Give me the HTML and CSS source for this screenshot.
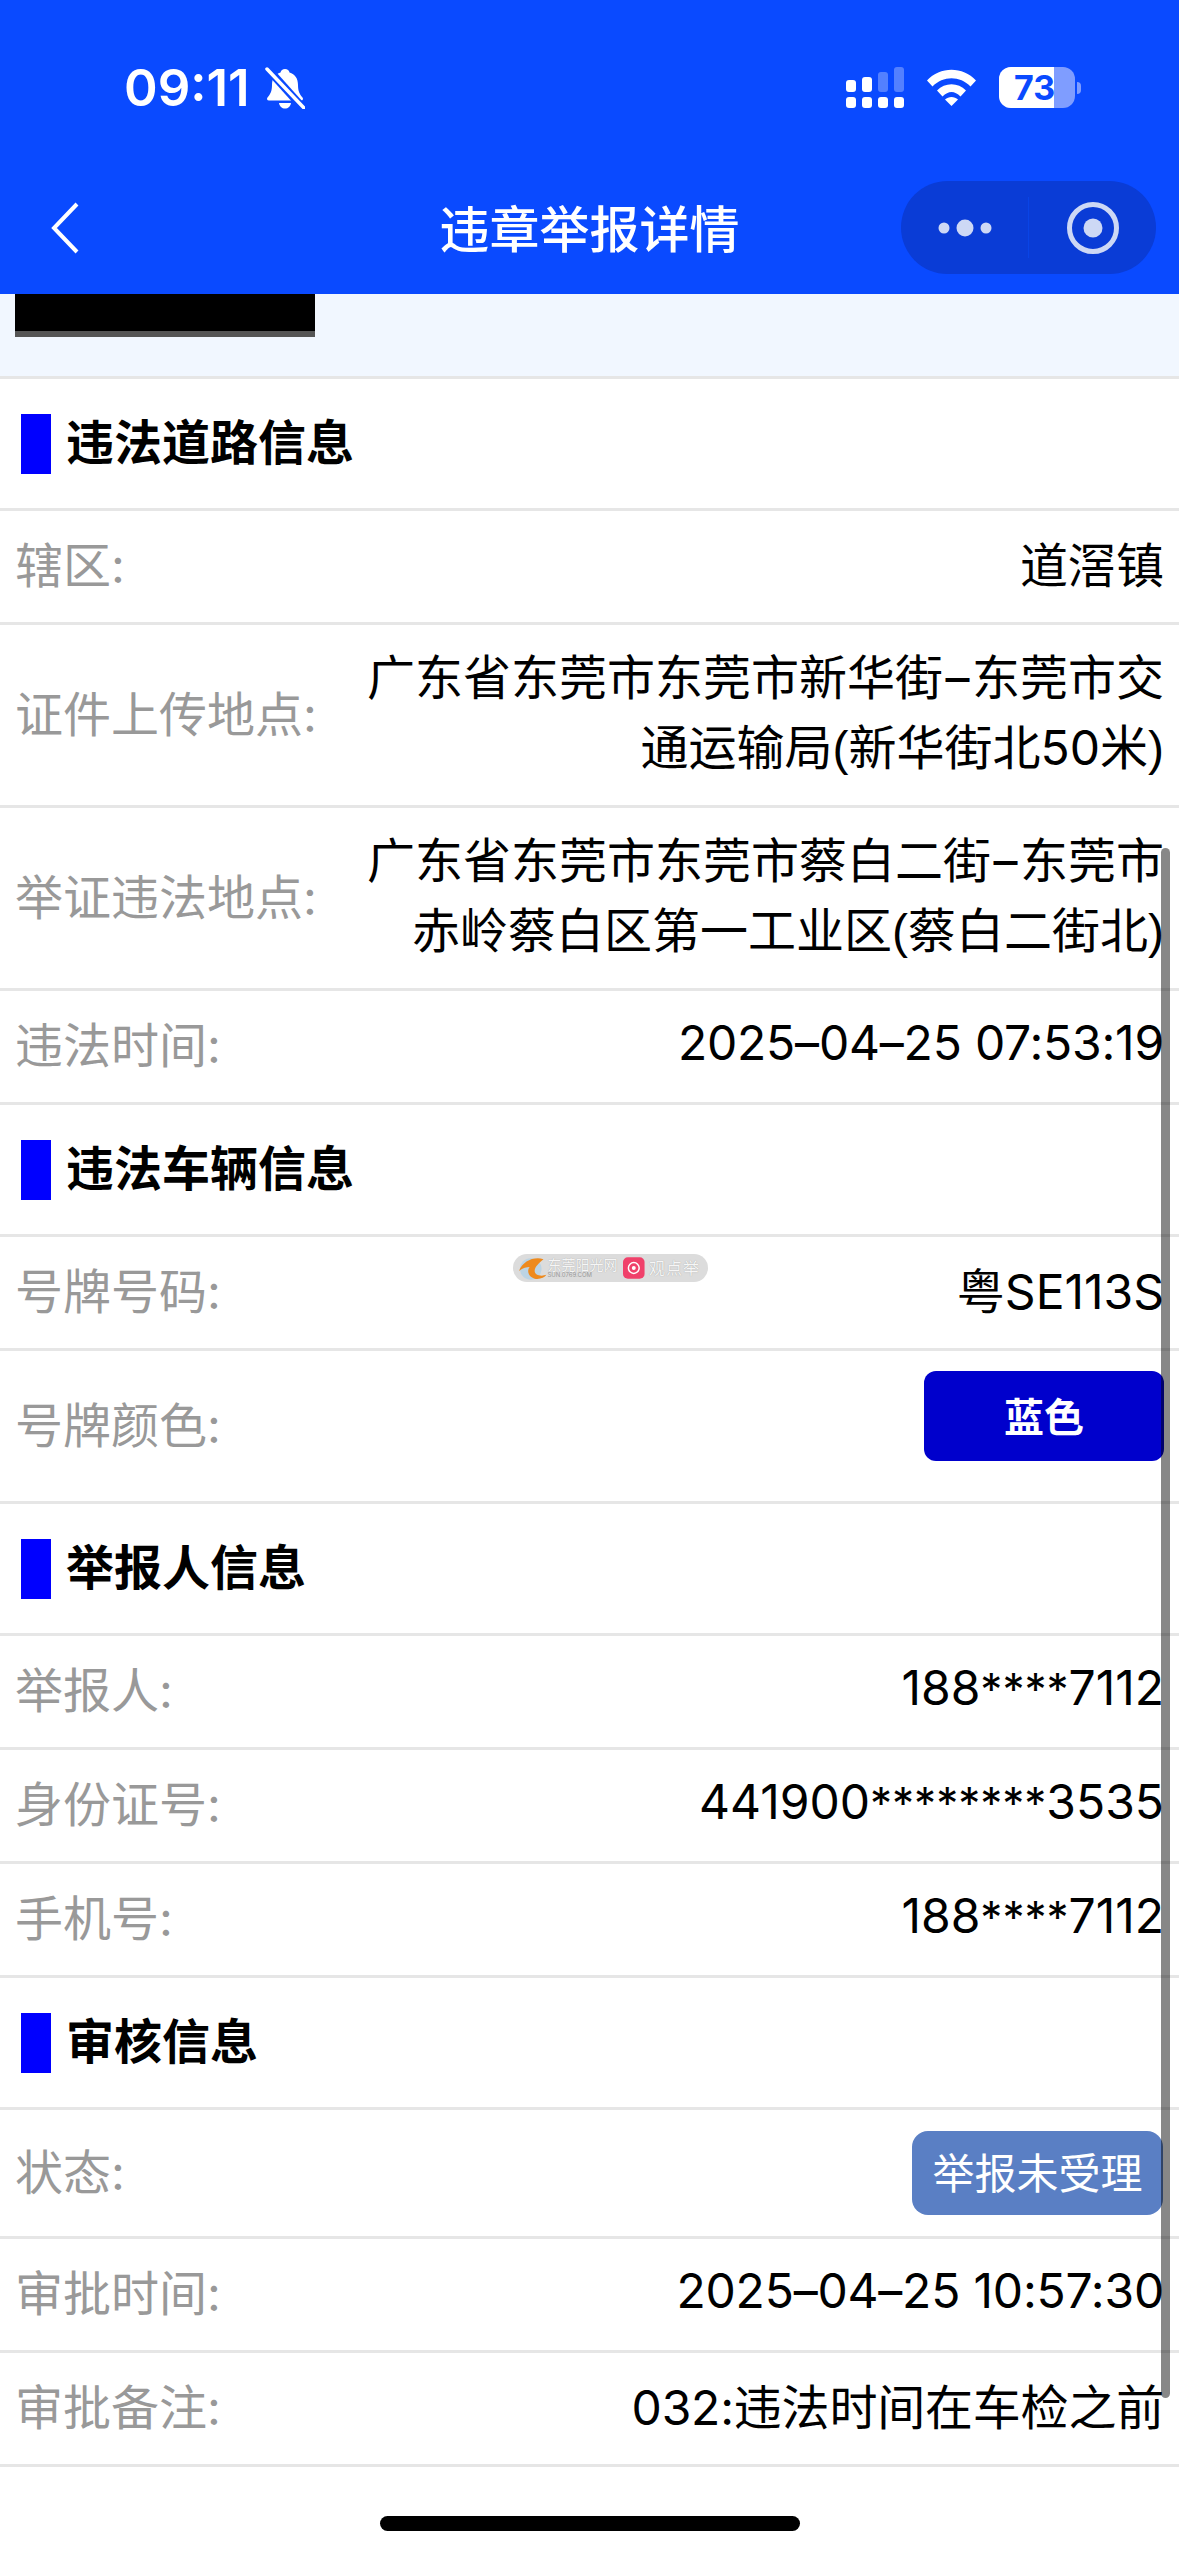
FILE: index.html
```html
<!DOCTYPE html>
<html>
<head>
<meta charset="utf-8">
<meta name="viewport" content="width=device-width, initial-scale=1.0">
<title>违章举报详情</title>
<link rel="stylesheet" href="styles.css">
</head>
<body>
<div class="page">
<div class="header">
  <div class="status">
    <div class="status-left">
      <span class="time">09:11</span>
      <svg class="bell" viewBox="0 0 40 42" width="40" height="42">
        <path d="M20 2c2.500 0 4 1.500 4.500 3.500C30 7 33 11.500 33 18c0 6 1.500 9 4.500 12.500 1 1.500.5 3-1.500 3H4c-2 0-2.500-1.500-1.500-3C5.500 27 7 24 7 18 7 11.500 10 7 15.500 5.500 16 3.500 17.500 2 20 2z" fill="#fff"/>
        <path d="M14 36h12c-.5 3.500-3 5.500-6 5.500s-5.500-2-6-5.500z" fill="#fff"/>
        <path d="M3 2l35 39" stroke="#0a4aff" stroke-width="8"/>
        <path d="M2 2l37 39" stroke="#fff" stroke-width="3.500" stroke-linecap="round"/>
      </svg>
    </div>
    <div class="status-right">
      <svg viewBox="0 0 58 41" width="58" height="41">
        <g fill="#fff">
          <rect x="0" y="13" width="10" height="12" rx="3"/>
          <rect x="16" y="10" width="10" height="15" rx="3"/>
          <rect x="0" y="30" width="10" height="11" rx="3"/>
          <rect x="16" y="30" width="10" height="11" rx="3"/>
          <rect x="32" y="30" width="10" height="11" rx="3"/>
          <rect x="48" y="30" width="10" height="11" rx="3"/>
        </g>
        <g fill="#fff" fill-opacity=".3">
          <rect x="32" y="5" width="10" height="20" rx="3"/>
          <rect x="48" y="0" width="10" height="25" rx="3"/>
        </g>
      </svg>
      <svg viewBox="0 0 49 37" width="49" height="37">
        <path d="M0 11.500C13-3 36-3 49 11.500l-5.500 6C33 6.500 16 6.500 5.500 17.500z" fill="#fff"/>
        <path d="M10 21.500C18 13 31 13 39 21.500l-5.500 6C27.500 21.500 21.500 21.500 15.500 27.500z" fill="#fff"/>
        <path d="M18 30.500c3.500-3.500 9.500-3.500 13 0l-6.500 6.500z" fill="#fff"/>
      </svg>
      <div class="battery">
        <div class="battery-body">
          <div class="battery-fill"></div>
          <span class="battery-num">73</span>
        </div>
        <div class="battery-tip"></div>
      </div>
    </div>
  </div>
  <div class="nav">
    <div class="nav-back">
      <svg viewBox="0 0 30 52" width="30" height="52">
        <path d="M27 2L4 26l23 24" fill="none" stroke="#fff" stroke-width="4"/>
      </svg>
    </div>
    <div class="nav-title">违章举报详情</div>
    <div class="nav-right">
      <div class="capsule">
        <div class="capsule-part">
          <svg viewBox="0 0 54 20" width="54" height="20">
            <circle cx="6" cy="10" r="5.500" fill="#cdd8f5"/>
            <circle cx="27" cy="10" r="8.500" fill="#cdd8f5"/>
            <circle cx="48" cy="10" r="5.500" fill="#cdd8f5"/>
          </svg>
        </div>
        <div class="capsule-line"></div>
        <div class="capsule-part">
          <svg viewBox="0 0 54 54" width="54" height="54">
            <circle cx="27" cy="27" r="23.500" fill="none" stroke="#cdd8f5" stroke-width="5"/>
            <circle cx="27" cy="27" r="9.500" fill="#cdd8f5"/>
          </svg>
        </div>
      </div>
    </div>
  </div>
</div>

<div class="band">
  <div class="redact"></div>
</div>

<div class="section-title"><span class="bar"></span><span class="title-text">违法道路信息</span></div>
<div class="row"><span class="label">辖区:</span><span class="value">道滘镇</span></div>
<div class="row row-tall"><span class="label">证件上传地点:</span>
  <div class="value value-wrap">
    <div>广东省东莞市东莞市新华街<span class="dash">–</span>东莞市交</div>
    <div>通运输局<span class="paren">(</span>新华街北50米<span class="paren">)</span></div>
  </div>
</div>
<div class="row row-tall"><span class="label">举证违法地点:</span>
  <div class="value value-wrap">
    <div>广东省东莞市东莞市蔡白二街<span class="dash">–</span>东莞市</div>
    <div>赤岭蔡白区第一工业区<span class="paren">(</span>蔡白二街北<span class="paren">)</span></div>
  </div>
</div>
<div class="row"><span class="label">违法时间:</span><span class="value value-num">2025–04–25 07:53:19</span></div>

<div class="section-title"><span class="bar"></span><span class="title-text">违法车辆信息</span></div>
<div class="row"><span class="label">号牌号码:</span><span class="value">粤SE113S</span></div>
<div class="row row-plate"><span class="label">号牌颜色:</span><span class="plate">蓝色</span></div>

<div class="section-title"><span class="bar"></span><span class="title-text">举报人信息</span></div>
<div class="row"><span class="label">举报人:</span><span class="value">188<span class="mask">****</span>7112</span></div>
<div class="row"><span class="label">身份证号:</span><span class="value">441900<span class="mask">********</span>3535</span></div>
<div class="row"><span class="label">手机号:</span><span class="value">188<span class="mask">****</span>7112</span></div>

<div class="section-title"><span class="bar"></span><span class="title-text">审核信息</span></div>
<div class="row row-status"><span class="label">状态:</span><span class="badge">举报未受理</span></div>
<div class="row"><span class="label">审批时间:</span><span class="value value-num">2025–04–25 10:57:30</span></div>
<div class="row"><span class="label">审批备注:</span><span class="value value-num">032:违法时间在车检之前</span></div>

<div class="home"><div class="home-bar"></div></div>

<div class="watermark">
  <svg viewBox="0 0 30 24" width="30" height="24">
    <circle cx="13" cy="13" r="11" fill="#bcd4e4"/>
    <path d="M26 3C16 0 5 5 1 15c4-3 8-4 11-4-3 3-2 10 5 12 5 1 10-1 12-4-6 2-12 0-12-4 0-4 4-8 9-12z" fill="#ee8a1d"/>
  </svg>
  <span class="wm-text"><span class="wm-name">东莞阳光网</span><span class="wm-sub">SUN.0769.COM</span></span>
  <svg class="wm-logo" viewBox="0 0 22 22" width="22" height="22">
    <rect width="22" height="22" rx="5" fill="#f0406a"/>
    <circle cx="11" cy="11" r="5.500" fill="none" stroke="#fff" stroke-width="1.500"/>
    <circle cx="11" cy="11" r="2" fill="#fff"/>
  </svg>
  <span class="wm-text"><span class="wm-name wm-name-short">观点举</span></span>
</div>
<div class="scrollbar"></div>
</div>
</body>
</html>
```

FILE: styles.css
```css
* { box-sizing: border-box; }
body {
  margin: 0;
  background: #fff;
  font-family: Inter, "Noto Sans CJK SC", sans-serif;
  color: #000;
}
.page {
  position: relative;
  height: 2556px;
  overflow: hidden;
}

/* top bar */
.header {
  height: 294px;
  background: #0a4aff;
  color: #fff;
}
.status {
  height: 175px;
  padding: 0 98px 0 124px;
  display: flex;
  align-items: center;
  justify-content: space-between;
}
.status-left {
  display: flex;
  align-items: center;
  gap: 15px;
}
.time {
  font-size: 51px;
  font-weight: 600;
  line-height: 1;
}
.status-right {
  display: flex;
  align-items: center;
  gap: 23px;
}
.battery {
  display: flex;
  align-items: center;
  gap: 2px;
}
.battery-body {
  position: relative;
  width: 76px;
  height: 41px;
  border-radius: 12px;
  background: #7f9dff;
  overflow: hidden;
}
.battery-fill {
  width: 55px;
  height: 100%;
  background: #fff;
}
.battery-num {
  position: absolute;
  top: 0;
  left: 15px;
  font-size: 34px;
  font-weight: 700;
  line-height: 41px;
  color: #0a4aff;
}
.battery-tip {
  width: 4px;
  height: 12px;
  border-radius: 0 4px 4px 0;
  background: #7f9dff;
}
.nav {
  height: 105px;
  display: grid;
  grid-template-columns: 1fr auto 1fr;
  align-items: center;
}
.nav-back {
  padding-left: 50px;
  display: flex;
}
.nav-title {
  font-size: 50px;
  font-weight: 500;
  padding-bottom: 3px;
}
.nav-right {
  display: flex;
  justify-content: flex-end;
  padding-right: 23px;
}
.capsule {
  width: 255px;
  height: 93px;
  border-radius: 47px;
  background: #0a3cd6;
  display: flex;
  align-items: center;
}
.capsule-part {
  flex: 1;
  display: flex;
  justify-content: center;
}
.capsule-line {
  width: 1px;
  height: 61px;
  background: #0a44e6;
}

.band {
  height: 82px;
  background: #f1f7ff;
}
.redact {
  width: 300px;
  height: 43px;
  margin-left: 15px;
  background: #000;
  border-bottom: 6px solid #555;
}

/* sections */
.section-title {
  height: 132px;
  border-top: 3px solid #e6e6e6;
  padding-left: 21px;
  display: flex;
  align-items: center;
  gap: 15px;
  font-size: 48px;
  font-weight: 700;
}
.title-text { margin-bottom: 9px; }
.bar {
  width: 30px;
  height: 60px;
  background: #0000ff;
}
.row {
  height: 114px;
  border-top: 3px solid #e6e6e6;
  padding: 0 15px;
  display: flex;
  align-items: center;
  justify-content: space-between;
  font-size: 48px;
}
.row-tall { height: 183px; }
.row-plate { height: 153px; }
.row-status { height: 129px; }
.label {
  color: #999;
  white-space: nowrap;
  margin-bottom: 9px;
}
.value {
  text-align: right;
  margin-bottom: 9px;
}
.value-wrap {
  white-space: nowrap;
  line-height: 70px;
  margin-bottom: 3px;
}
.value-num { letter-spacing: -.2px; }
.dash { padding: 0 2.5px; }
.paren { font-family: "Liberation Sans", sans-serif; }
.mask { font-size: 44px; }
.plate {
  width: 240px;
  height: 90px;
  margin-bottom: 20px;
  padding-bottom: 3px;
  border-radius: 12px;
  background: #0000cc;
  color: #fff;
  font-size: 40px;
  font-weight: 700;
  display: flex;
  align-items: center;
  justify-content: center;
}
.badge {
  width: 251px;
  height: 84px;
  margin-right: 1px;
  padding-bottom: 6px;
  border-radius: 16px;
  background: #5a7fc4;
  color: #fff;
  font-size: 42px;
  display: flex;
  align-items: center;
  justify-content: center;
}
.home {
  border-top: 3px solid #e6e6e6;
  padding-top: 49px;
  display: flex;
  justify-content: center;
}
.home-bar {
  width: 420px;
  height: 15px;
  border-radius: 8px;
  background: #000;
}

/* overlays */
.watermark {
  position: absolute;
  left: 513px;
  top: 1254px;
  width: 195px;
  height: 28px;
  padding: 0 8px 0 5px;
  border-radius: 14px;
  background: #dcdcdc;
  display: flex;
  align-items: center;
}
.wm-logo { margin: 0 4px 0 6px; }
.wm-text {
  display: flex;
  flex-direction: column;
  color: #f6f6f6;
  line-height: 1;
  white-space: nowrap;
}
.wm-name {
  font-size: 14px;
  text-shadow: 0 0 1px #999;
}
.wm-name-short {
  font-size: 16px;
  letter-spacing: 1px;
}
.wm-sub {
  font-size: 6px;
  color: #999;
}
.scrollbar {
  position: absolute;
  left: 1161px;
  top: 848px;
  width: 9px;
  height: 1550px;
  border-radius: 5px;
  background: rgba(0, 0, 0, .47);
}
```
